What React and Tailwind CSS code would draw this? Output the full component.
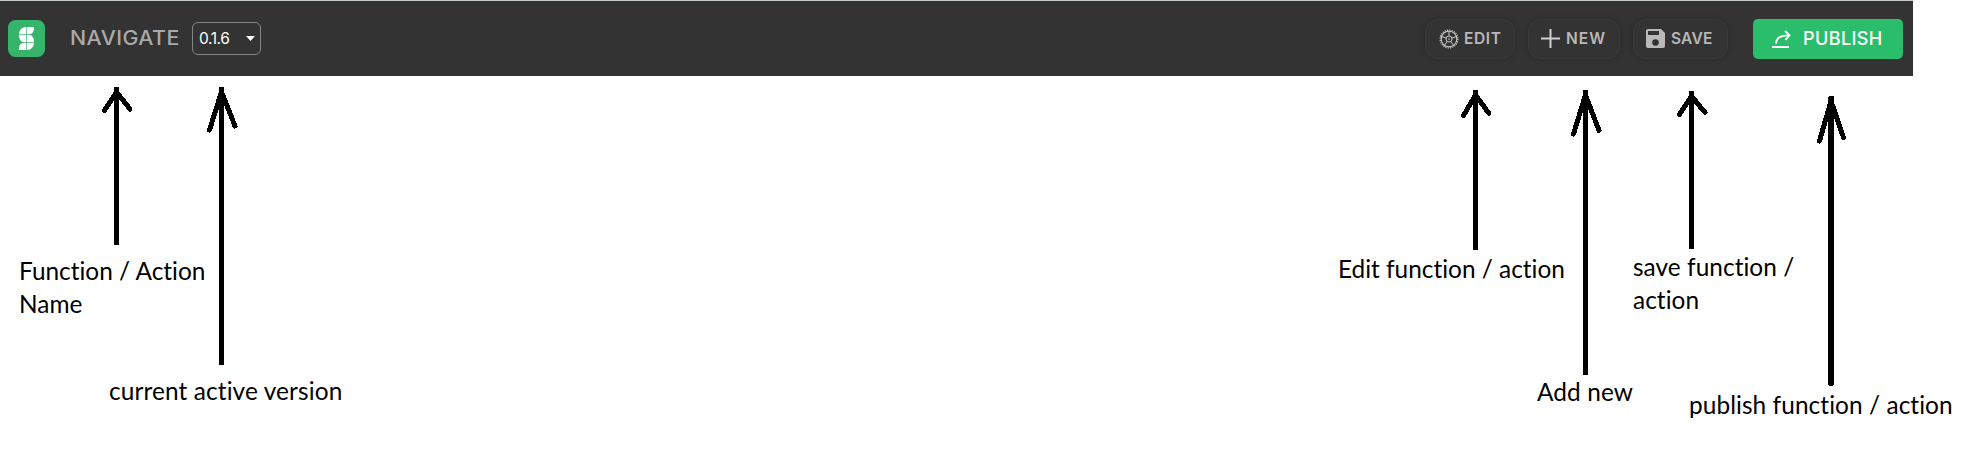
const arrows = [
  { x: 116.5, top: 90, bottom: 243, left: [104.5, 110.5], right: [130, 109], w: 5 },
  { x: 221.5, top: 90, bottom: 363, left: [209.5, 130], right: [235, 126], w: 5 },
  { x: 1475.5, top: 93, bottom: 248, left: [1463.5, 115.5], right: [1489, 113.5], w: 5 },
  { x: 1585.5, top: 93, bottom: 373, left: [1573.5, 134], right: [1599, 130.5], w: 5 },
  { x: 1691.5, top: 94, bottom: 247, left: [1679.5, 114.5], right: [1705, 112.5], w: 5 },
  { x: 1831, top: 99, bottom: 383, left: [1819.5, 141], right: [1843.5, 137.5], w: 6 },
];

function Arrows() {
  return (
    <svg className="absolute left-0 top-0" width="1961" height="476" fill="none" stroke="#000" strokeLinecap="round" shapeRendering="crispEdges">
      {arrows.map((a) => (
        <g key={a.x}>
          <path d={`M${a.x} ${a.top}V${a.bottom}`} strokeWidth={a.w} />
          <path d={`M${a.x - 2.5} ${a.top - 2}h5`} strokeWidth="2" strokeLinecap="butt" />
          <path d={`M${a.left[0]} ${a.left[1]}L${a.x} ${a.top + 2}L${a.right[0]} ${a.right[1]}`} strokeWidth="5" strokeLinejoin="round" />
        </g>
      ))}
    </svg>
  );
}

function Logo() {
  return (
    <svg width="37" height="37" viewBox="0 0 37 37" className="shrink-0">
      <rect width="37" height="37" rx="7.5" fill="#37b46b" />
      <path
        d="M26 7V9A5.5 5.5 0 0 1 20.5 14.5A5.5 6.5 0 0 1 26 21V23A7 7 0 0 1 19 30H11V28A5.5 5.5 0 0 1 16.5 22.5A5.5 6.5 0 0 1 11 16V14A7 7 0 0 1 18 7Z"
        fill="#fff"
      />
      <path d="M18.5 7V30M11 14.5H26M11 22.5H26" stroke="#37b46b" strokeWidth="0.7" />
    </svg>
  );
}

function GearIcon() {
  return (
    <svg width="20" height="20" viewBox="0 0 20 20" fill="none" stroke="#c8c8c8" className="shrink-0">
      <circle cx="10" cy="10" r="7.8" strokeWidth="1.1" />
      <circle cx="10" cy="10" r="8.9" strokeWidth="1.2" strokeDasharray="1.25 1.08" />
      <circle cx="10" cy="10" r="3" strokeWidth="1" />
      <circle cx="10" cy="10" r="0.8" fill="#c8c8c8" stroke="none" />
      <path d="M10 6.9V2M13 9L17.4 7.5M11.9 12.5L14.6 16.4M8.1 12.5L5.4 16.4M7 9L2.6 7.5" strokeWidth="1" />
    </svg>
  );
}

function PlusIcon() {
  return (
    <svg width="19" height="19" viewBox="0 0 19 19" stroke="#d0d0d0" strokeWidth="2" className="shrink-0">
      <path d="M9.5 0V19M0 9.5H19" />
    </svg>
  );
}

function SaveIcon() {
  return (
    <svg width="19" height="19" viewBox="0 0 19 19" className="shrink-0">
      <path
        fillRule="evenodd"
        fill="#b9b9b9"
        d="M2 0H15L19 4V17A2 2 0 0 1 17 19H2A2 2 0 0 1 0 17V2A2 2 0 0 1 2 0ZM2 2V6H13V2ZM9.5 10.2A3.3 3.3 0 1 0 9.5 16.8A3.3 3.3 0 1 0 9.5 10.2Z"
      />
    </svg>
  );
}

function ShareIcon() {
  return (
    <svg width="19" height="18" viewBox="0 0 19 18" fill="none" stroke="#fff" strokeWidth="1.8" className="shrink-0">
      <path d="M0 17H17M4.2 13.6C3.8 8.6 8 5.3 16.8 5.3M13 1L17.6 5.3L13.4 9.8" />
    </svg>
  );
}

const dark =
  "flex h-10 items-center rounded-[13px] border border-[#393939] font-semibold text-[#b8b8b8] text-[15.5px] shadow-[0_0_6px_rgba(0,0,0,0.16)]";

export default function App() {
  return (
    <div className="relative h-[476px] w-[1961px] overflow-hidden bg-white font-['Inter',sans-serif]">
      <header className="flex h-[76px] w-[1913px] items-center border-t border-t-[#c5cbc7] bg-[#333333] pl-2 pr-[10px]">
        <Logo />
        <h1 className="ml-[25px] w-[122px] origin-left scale-x-[1.09] whitespace-nowrap text-[19.6px] font-medium tracking-[0.4px] text-[#aaaaaa]">NAVIGATE</h1>
        <button className="flex h-[33px] w-[69px] items-center justify-between rounded-[6px] border border-[#858585] pl-[6px] pr-[5px] text-[15.5px] text-white">
          <span className="tracking-[-0.4px]">0.1.6</span>
          <svg width="9" height="5" viewBox="0 0 9 5" fill="#fff">
            <path d="M0 0H9L4.5 5Z" />
          </svg>
        </button>
        <nav className="ml-auto flex items-center">
          <button className={dark + " w-[90px] pl-[13px]"}>
            <GearIcon />
            <span className="ml-[5px] tracking-[0.6px]">EDIT</span>
          </button>
          <button className={dark + " ml-[13px] w-[92px] pl-3"}>
            <PlusIcon />
            <span className="ml-[6px] tracking-[1px]">NEW</span>
          </button>
          <button className={dark + " ml-[13px] w-[95px] pl-3"}>
            <SaveIcon />
            <span className="ml-[6px] tracking-[0.2px]">SAVE</span>
          </button>
          <button className="ml-[25px] flex h-10 w-[150px] items-center rounded-[5px] bg-[#2abd6b] pl-[19px] text-[18px] font-medium text-white">
            <ShareIcon />
            <span className="ml-3 tracking-[0.4px]">PUBLISH</span>
          </button>
        </nav>
      </header>
      <Arrows />
      <div className="font-['Lato',sans-serif] text-[24.4px] leading-[33px] text-black [font-variant-ligatures:none]">
        <p className="absolute left-[19px] top-[254px] whitespace-nowrap">Function / Action<br />Name</p>
        <p className="absolute left-[109px] top-[374px] whitespace-nowrap tracking-[0.12px]">current active version</p>
        <p className="absolute left-[1338px] top-[252px] whitespace-nowrap">Edit function / action</p>
        <p className="absolute left-[1537px] top-[375px] whitespace-nowrap tracking-[0.1px]">Add new</p>
        <p className="absolute left-[1633px] top-[250px] whitespace-nowrap tracking-[0.05px]">save function /<br />action</p>
        <p className="absolute left-[1689px] top-[388px] whitespace-nowrap tracking-[0.08px]">publish function / action</p>
      </div>
    </div>
  );
}
